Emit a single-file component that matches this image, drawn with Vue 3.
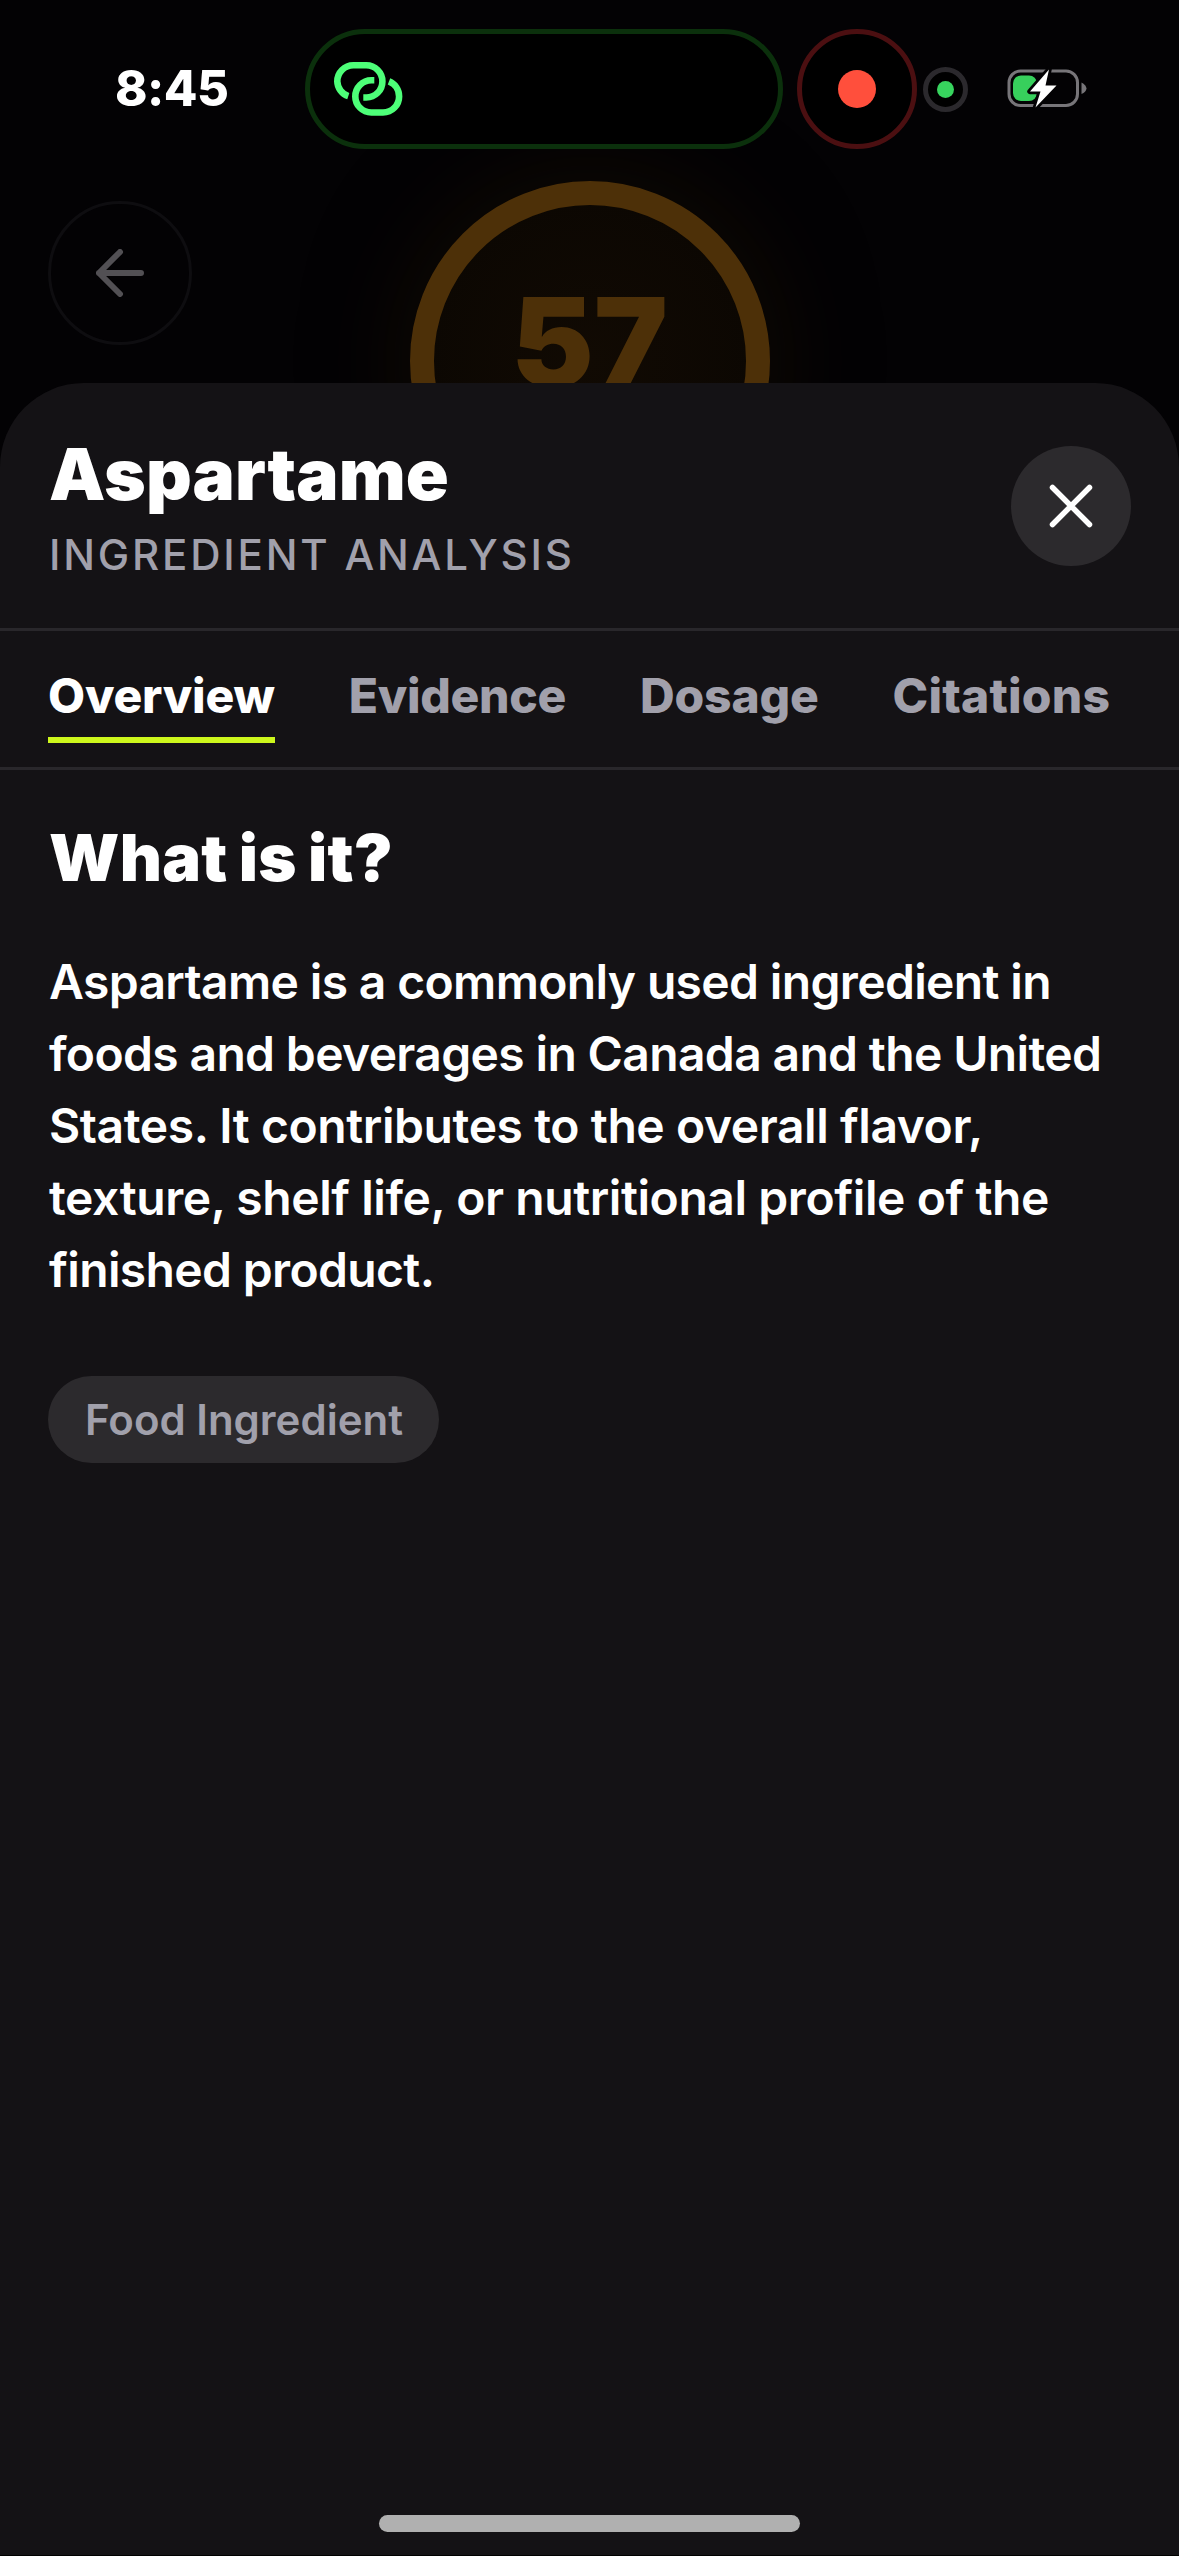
<script setup>
import { ref } from 'vue'

const tabs = ['Overview', 'Evidence', 'Dosage', 'Citations']
const active = ref('Overview')
</script>

<template>
  <main class="screen">
    <header class="status">
      <span class="time">8:45</span>
      <div class="island">
        <svg class="link" viewBox="0 0 69 54" fill="none" stroke="#4dff78" stroke-width="6.6">
          <path d="M14.300 34.200A16.100 16.100 0 0 1 3.300 19.400A16.100 16.100 0 0 1 19.400 3.300H32.300A16.100 16.100 0 0 1 32.300 35.500H29.300" />
          <path d="M40.300 18.300H37.400A16.100 16.100 0 0 0 37.400 50.500H49A16.100 16.100 0 0 0 65.100 34.400A16.100 16.100 0 0 0 55 19.400" />
        </svg>
      </div>
      <div class="record"><i></i></div>
      <div class="camera"><i></i></div>
      <svg class="battery" viewBox="0 0 80 42">
        <rect x="2" y="4" width="68.500" height="34.500" rx="11.500" fill="none" stroke="#777579" stroke-width="3" />
        <path d="M74.500 15.500Q79 18 79.500 21.500Q79 25 74.500 27Z" fill="#777579" />
        <rect x="6" y="8.500" width="24" height="25.500" rx="8" fill="#37cf5c" />
        <path d="M42 2.500L23 24.500H33.500L28.500 40.500L49.500 18.500H38.500Z" fill="#fff" stroke="#030204" stroke-width="5.500" paint-order="stroke" stroke-linejoin="round" />
      </svg>
    </header>

    <section class="backdrop">
      <div class="back">
        <svg viewBox="0 0 48 48" fill="none" stroke="#525054" stroke-width="6" stroke-linecap="round" stroke-linejoin="round">
          <path d="M45 24H3M24 3L3 24L24 45" />
        </svg>
      </div>
      <div class="score"><span>57</span></div>
      <div class="spacer"></div>
    </section>

    <section class="sheet">
      <div class="head">
        <div class="titles">
          <h1>Aspartame</h1>
          <p>INGREDIENT ANALYSIS</p>
        </div>
        <button class="close" aria-label="Close">
          <svg viewBox="0 0 44 44" stroke="#fff" stroke-width="5.500" stroke-linecap="round">
            <path d="M3.500 3.500L40.500 40.500M40.500 3.500L3.500 40.500" />
          </svg>
        </button>
      </div>
      <nav class="tabs">
        <button v-for="tab in tabs" :key="tab" :class="['tab', tab.toLowerCase(), { active: tab === active }]" @click="active = tab">{{ tab }}</button>
      </nav>
      <article class="body">
        <h2>What is it?</h2>
        <p>
          <span class="tight">Aspartame is a commonly used ingredient in</span><br />
          <span class="tight">foods and beverages in Canada and the United</span><br />
          States. It contributes to the overall flavor,<br />
          texture, shelf life, or nutritional profile of the<br />
          <span class="tight">finished product.</span>
        </p>
        <span class="chip">Food Ingredient</span>
      </article>
      <div class="home"></div>
    </section>
  </main>
</template>

<style>
body {
  margin: 0;
  background: #030204;
}
</style>

<style scoped>
.screen {
  width: 1179px;
  height: 2556px;
  box-sizing: border-box;
  overflow: hidden;
  display: flex;
  flex-direction: column;
  background: #030204;
  border-bottom: 1px solid #000;
  font-family: Inter, sans-serif;
  font-optical-sizing: none;
  color: #fff;
}
.status {
  height: 120px;
  padding-top: 29px;
  display: flex;
  align-items: center;
  flex: none;
  position: relative;
  z-index: 1;
}
.time {
  width: 190px;
  margin-left: 115px;
  font-size: 49px;
  font-weight: 800;
  line-height: 60px;
  letter-spacing: -0.5px;
}
.island {
  box-sizing: border-box;
  width: 478px;
  height: 120px;
  border: 5px solid #0b300c;
  border-radius: 60px;
  background: #000;
  display: flex;
  align-items: center;
  padding-left: 24px;
}
.link {
  width: 69px;
  height: 54px;
}
.record {
  box-sizing: border-box;
  width: 120px;
  height: 120px;
  margin-left: 14px;
  border: 5px solid #4b0f11;
  border-radius: 50%;
  background: #000;
  display: grid;
  place-items: center;
}
.record i {
  width: 38px;
  height: 38px;
  border-radius: 50%;
  background: #ff4f3c;
}
.camera {
  box-sizing: border-box;
  width: 45px;
  height: 45px;
  margin-left: 6px;
  border: 5px solid #2b292d;
  border-radius: 50%;
  background: #000;
  display: grid;
  place-items: center;
}
.camera i {
  width: 17px;
  height: 17px;
  border-radius: 50%;
  background: #37d45e;
}
.battery {
  width: 80px;
  height: 42px;
  margin: 0 0 3px 39px;
}
.backdrop {
  height: 234px;
  flex: none;
  padding: 0 48px;
  display: flex;
  justify-content: space-between;
  align-items: flex-start;
}
.back {
  box-sizing: border-box;
  width: 144px;
  height: 144px;
  margin-top: 52px;
  border: 3px solid #0e0d10;
  border-radius: 50%;
  display: grid;
  place-items: center;
}
.back svg {
  width: 48px;
  height: 48px;
}
.spacer {
  width: 144px;
}
.score {
  box-sizing: border-box;
  width: 360px;
  height: 360px;
  margin-top: 32px;
  border: 24px solid #4d3008;
  border-radius: 50%;
  background: radial-gradient(circle, #110a03, #0a0602);
  box-shadow: 0 0 100px #120b03;
  display: flex;
  justify-content: center;
  color: #4d3008;
}
.score span {
  margin-top: 61px;
  font-size: 124px;
  line-height: 152px;
  font-weight: 900;
}
.sheet {
  flex: 1;
  min-height: 0;
  position: relative;
  z-index: 1;
  background: #141215;
  border-radius: 84px 84px 0 0;
  display: flex;
  flex-direction: column;
}
.head {
  box-sizing: border-box;
  height: 248px;
  padding: 0 48px;
  border-bottom: 3px solid #29272b;
  display: flex;
  justify-content: space-between;
}
.titles {
  padding: 48px 0 0 1px;
}
h1,
h2,
p {
  margin: 0;
}
h1 {
  font-size: 71px;
  line-height: 87px;
  font-weight: 900;
  letter-spacing: 0.1px;
}
.titles p {
  margin-top: 11px;
  font-size: 42px;
  line-height: 51px;
  font-weight: 550;
  letter-spacing: 2.8px;
  color: #a1a0ab;
}
button {
  border: 0;
  padding: 0;
  background: none;
  font: inherit;
  color: inherit;
}
.close {
  width: 120px;
  height: 120px;
  margin-top: 63px;
  border-radius: 50%;
  background: #2c2a2d;
  display: grid;
  place-items: center;
}
.close svg {
  width: 44px;
  height: 44px;
}
.tabs {
  box-sizing: border-box;
  height: 139px;
  padding: 36px 48px 0;
  border-bottom: 3px solid #29272b;
  display: flex;
  align-items: flex-start;
  gap: 74px;
}
.tab {
  box-sizing: border-box;
  height: 76px;
  padding-bottom: 12px;
  border-bottom: 6px solid transparent;
  font-size: 48px;
  line-height: 58px;
  font-weight: 800;
  letter-spacing: -0.3px;
  color: #a1a0ab;
  white-space: nowrap;
}
.tab.active {
  letter-spacing: -0.2px;
  color: #fff;
  border-color: #cdf71c;
}
.tab.dosage {
  letter-spacing: -0.2px;
}
.tab.citations {
  letter-spacing: 0.2px;
}
.body {
  flex: 1;
  padding: 48px 48px 0;
}
h2 {
  padding-left: 1px;
  font-size: 65px;
  line-height: 80px;
  font-weight: 900;
  letter-spacing: 0.3px;
  word-spacing: -2px;
}
.body p {
  margin-top: 48px;
  padding-left: 1px;
  font-size: 48px;
  line-height: 72px;
  font-weight: 600;
  letter-spacing: -0.42px;
  white-space: nowrap;
}
.body .tight {
  letter-spacing: -0.65px;
}
.chip {
  display: inline-block;
  margin-top: 70px;
  padding: 0 36px 0 37px;
  border-radius: 44px;
  background: #2c2a2d;
  color: #a1a0ab;
  font-size: 42px;
  line-height: 87px;
  font-weight: 600;
}
.home {
  width: 421px;
  height: 17px;
  margin: 0 auto 23px;
  border-radius: 9px;
  background: #b0b0b0;
}
</style>
